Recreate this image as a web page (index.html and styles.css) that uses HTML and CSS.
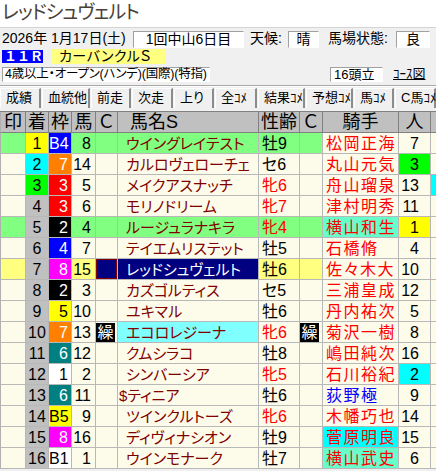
FILE: index.html
```html
<!DOCTYPE html>
<html lang="ja">
<head>
<meta charset="utf-8">
<title>レッドシュヴェルト</title>
<link rel="stylesheet" href="styles.css">
</head>
<body>
<div class="title">レッドシュヴェルト</div>
<div class="meta meta1">
  <span class="date">2026年 1月17日(土)</span>
  <span class="box kai">1回中山6日目</span>
  <span class="lbl tenki-l">天候:</span><span class="box tenki">晴</span>
  <span class="lbl baba-l">馬場状態:</span><span class="box baba">良</span>
</div>
<div class="meta meta2">
  <span class="rno">１１Ｒ</span><span class="rname">カーバンクルＳ</span>
</div>
<div class="meta meta3">
  <span class="box cond">4歳以上・オープン(ハンデ)(国際)(特指)</span>
  <span class="box tosu">16頭立</span>
  <span class="course">ｺｰｽ図</span>
</div>
<div class="sep"></div>
<div class="tabs">
  <span class="tab t1">成績</span>
  <span class="tab t2">血統他</span>
  <span class="tab t3">前走</span>
  <span class="tab t4">次走</span>
  <span class="tab t5">上り</span>
  <span class="tab t6">全ｺﾒ</span>
  <span class="tab t7">結果ｺﾒ</span>
  <span class="tab t8">予想ｺﾒ</span>
  <span class="tab t9">馬ｺﾒ</span>
  <span class="tab t10">C馬ｺﾒ</span>
</div>
<div class="tbl">
  <div class="row head">
    <div class="c">印</div><div class="c">着</div><div class="c">枠</div><div class="c">馬</div><div class="c">Ｃ</div>
    <div class="c name-h">馬名S</div><div class="c">性齢</div><div class="c">Ｃ</div><div class="c">騎手</div><div class="c">人</div><div class="c x"></div>
  </div>

  <div class="row">
    <div class="c bg-g"></div><div class="c chaku bg-y">1</div><div class="c waku w4">B4</div><div class="c uma bg-g">8</div><div class="c bg-g"></div>
    <div class="c name bg-g">ウイングレイテスト</div><div class="c sa bg-g">牡9</div><div class="c bg-g"></div><div class="c jk">松岡正海</div><div class="c nk">7</div><div class="c x"></div>
  </div>
  <div class="row">
    <div class="c"></div><div class="c chaku bg-c">2</div><div class="c waku w7">7</div><div class="c uma">14</div><div class="c"></div>
    <div class="c name">カルロヴェローチェ</div><div class="c sa">セ6</div><div class="c"></div><div class="c jk">丸山元気</div><div class="c nk bg-lime">3</div><div class="c x"></div>
  </div>
  <div class="row">
    <div class="c"></div><div class="c chaku bg-lime">3</div><div class="c waku w3">3</div><div class="c uma">5</div><div class="c"></div>
    <div class="c name">メイクアスナッチ</div><div class="c sa f">牝6</div><div class="c"></div><div class="c jk">舟山瑠泉</div><div class="c nk">13</div><div class="c x bg-c"></div>
  </div>
  <div class="row">
    <div class="c"></div><div class="c chaku bg-gr">4</div><div class="c waku w3">3</div><div class="c uma">6</div><div class="c"></div>
    <div class="c name">モリノドリーム</div><div class="c sa f">牝7</div><div class="c"></div><div class="c jk">津村明秀</div><div class="c nk">11</div><div class="c x"></div>
  </div>
  <div class="row">
    <div class="c bg-g"></div><div class="c chaku bg-gr">5</div><div class="c waku w2">2</div><div class="c uma bg-g">4</div><div class="c bg-g"></div>
    <div class="c name bg-g">ルージュラナキラ</div><div class="c sa f bg-g">牝4</div><div class="c bg-g"></div><div class="c jk bg-m">横山和生</div><div class="c nk bg-y">1</div><div class="c x"></div>
  </div>
  <div class="row">
    <div class="c"></div><div class="c chaku bg-gr">6</div><div class="c waku w4">4</div><div class="c uma">7</div><div class="c"></div>
    <div class="c name">テイエムリステット</div><div class="c sa">牡5</div><div class="c"></div><div class="c jk">石橋脩</div><div class="c nk">4</div><div class="c x"></div>
  </div>
  <div class="row">
    <div class="c bg-ly"></div><div class="c chaku bg-gr">7</div><div class="c waku w8">8</div><div class="c uma bg-ly">15</div><div class="c sel"></div>
    <div class="c name bg-navy">レッドシュヴェルト</div><div class="c sa bg-ly">牡6</div><div class="c bg-ly"></div><div class="c jk">佐々木大</div><div class="c nk">10</div><div class="c x"></div>
  </div>
  <div class="row">
    <div class="c"></div><div class="c chaku bg-gr">8</div><div class="c waku w2">2</div><div class="c uma">3</div><div class="c"></div>
    <div class="c name">カズゴルティス</div><div class="c sa">セ5</div><div class="c"></div><div class="c jk">三浦皇成</div><div class="c nk">12</div><div class="c x"></div>
  </div>
  <div class="row">
    <div class="c"></div><div class="c chaku bg-gr">9</div><div class="c waku w5">5</div><div class="c uma">10</div><div class="c"></div>
    <div class="c name">ユキマル</div><div class="c sa">牡6</div><div class="c"></div><div class="c jk">丹内祐次</div><div class="c nk">5</div><div class="c x"></div>
  </div>
  <div class="row">
    <div class="c"></div><div class="c chaku bg-gr">10</div><div class="c waku w7">7</div><div class="c uma">13</div><div class="c kuri"><span>繰</span></div>
    <div class="c name bg-lc">エコロレジーナ</div><div class="c sa f">牝6</div><div class="c kuri"><span>繰</span></div><div class="c jk">菊沢一樹</div><div class="c nk">8</div><div class="c x"></div>
  </div>
  <div class="row">
    <div class="c"></div><div class="c chaku bg-gr">11</div><div class="c waku w6">6</div><div class="c uma">12</div><div class="c"></div>
    <div class="c name">クムシラコ</div><div class="c sa">牡8</div><div class="c"></div><div class="c jk">嶋田純次</div><div class="c nk">16</div><div class="c x"></div>
  </div>
  <div class="row">
    <div class="c"></div><div class="c chaku bg-gr">12</div><div class="c waku w1">1</div><div class="c uma">2</div><div class="c"></div>
    <div class="c name">シンバーシア</div><div class="c sa f">牝5</div><div class="c"></div><div class="c jk">石川裕紀</div><div class="c nk bg-c">2</div><div class="c x"></div>
  </div>
  <div class="row">
    <div class="c"></div><div class="c chaku bg-gr">13</div><div class="c waku w6">6</div><div class="c uma">11</div><div class="c"></div>
    <div class="c name"><span class="dollar">$</span>ティニア</div><div class="c sa">牡6</div><div class="c"></div><div class="c jk blue">荻野極</div><div class="c nk">9</div><div class="c x"></div>
  </div>
  <div class="row">
    <div class="c"></div><div class="c chaku bg-gr">14</div><div class="c waku w5">B5</div><div class="c uma">9</div><div class="c"></div>
    <div class="c name">ツインクルトーズ</div><div class="c sa f">牝6</div><div class="c"></div><div class="c jk">木幡巧也</div><div class="c nk">14</div><div class="c x"></div>
  </div>
  <div class="row">
    <div class="c"></div><div class="c chaku bg-gr">15</div><div class="c waku w8">8</div><div class="c uma">16</div><div class="c"></div>
    <div class="c name">ディヴィナシオン</div><div class="c sa">牡9</div><div class="c"></div><div class="c jk bg-c">菅原明良</div><div class="c nk">15</div><div class="c x"></div>
  </div>
  <div class="row">
    <div class="c"></div><div class="c chaku bg-gr">16</div><div class="c waku w1">B1</div><div class="c uma">1</div><div class="c"></div>
    <div class="c name">ウインモナーク</div><div class="c sa">牡7</div><div class="c"></div><div class="c jk bg-m">横山武史</div><div class="c nk">6</div><div class="c x"></div>
  </div>
</div>
</body>
</html>
```
FILE: styles.css
```css
* { box-sizing: border-box; }
html, body { margin: 0; padding: 0; }
body {
  width: 436px;
  height: 471px;
  overflow: hidden;
  background: #f0f0f0;
  font-family: "Liberation Sans", "Noto Sans CJK JP", sans-serif;
  color: #000;
  font-feature-settings: "palt";
}

.title {
  height: 28px;
  padding-left: 2px;
  font-size: 19px;
  line-height: 25px;
  color: #4a4038;
  background: #ffffff;
  border-bottom: 1px solid #d4d4d4;
  letter-spacing: -1px;
}

.meta { display: flex; align-items: stretch; font-size: 14px; }
.meta1 { margin-top: 3px; height: 17px; line-height: 15px; }
.meta2 { margin-top: 1px; height: 15px; line-height: 14px; }
.meta3 { margin-top: 3px; height: 15px; line-height: 13px; }

.box {
  background: #fff;
  border: 1px solid;
  border-color: #a0a0a0 #ffffff #ffffff #a0a0a0;
}
.date { width: 133px; padding-left: 2px; white-space: nowrap; }
.kai { width: 111px; text-align: center; }
.lbl { white-space: nowrap; }
.tenki-l { margin-left: 6px; width: 38px; }
.tenki { width: 31px; text-align: center; }
.baba-l { margin-left: 9px; width: 68px; }
.baba { width: 34px; text-align: center; }

.rno {
  margin-left: 2px;
  width: 41px;
  height: 13px;
  margin-top: 1px;
  background: #0000ff;
  color: #fff;
  font-weight: bold;
  font-size: 13px;
  line-height: 13px;
  padding-left: 2px;
  font-feature-settings: normal;
  white-space: nowrap;
}
.rname {
  margin-left: 9px;
  width: 113px;
  background: #ffff80;
  padding-left: 7px;
  font-size: 14px;
  letter-spacing: 0.5px;
}

.cond {
  margin-left: 2px;
  width: 208px;
  font-size: 12.5px;
  padding-left: 2px;
  white-space: nowrap;
  letter-spacing: -0.2px;
}
.tosu { margin-left: 120px; width: 53px; font-size: 13px; padding-left: 3px; }
.course { margin-left: 10px; font-size: 13px; text-decoration: underline; color: #000; }

.sep {
  margin-top: 3px;
  height: 2px;
  border-top: 1px solid #a8a8a8;
  border-bottom: 1px solid #ffffff;
}

.tabs {
  margin-top: 1px;
  height: 20px;
  display: flex;
  gap: 1px;
}
.tab {
  flex: none;
  height: 20px;
  font-size: 13px;
  line-height: 18px;
  padding-left: 5px;
  border-top: 1px solid #ffffff;
  border-left: 1px solid #ffffff;
  border-right: 2px solid #8c8c8c;
  white-space: nowrap;
  background: #f0f0f0;
}
.t1 { width: 41px; }
.t2 { width: 48px; }
.t3 { width: 40px; }
.t4 { width: 41px; }
.t5 { width: 40px; }
.t6 { width: 42px; }
.t7 { width: 47px; }
.t8 { width: 47px; }
.t9 { width: 40px; }
.t10 { width: 41px; }

.tbl { margin-top: 3px; }
.row {
  display: grid;
  grid-template-columns: 26px 23px 23px 24px 22px 141px 41px 23px 76px 32px 5px;
  height: 21px;
}
.row.head {
  height: 22px;
  border-top: 1px solid #808080;
}
.c {
  height: 21px;
  background: #fdfbea;
  border-right: 1px solid #b8b8b8;
  border-bottom: 1px solid #b8b8b8;
  font-size: 15px;
  line-height: 19px;
  padding-top: 1px;
  text-align: center;
  white-space: nowrap;
}
.row .c:first-child { border-left: 1px solid #b0b0b0; }
.head .c {
  background: #c0c0c0;
  font-size: 18px;
  line-height: 20px;
  padding-top: 0;
  border-right-color: #808080;
  border-bottom-color: #808080;
}
.head .name-h { text-align: left; padding-left: 12px; }
.c.x { border-right: none; }

.chaku { font-size: 16px; }
.uma { text-align: right; padding-right: 4px; font-size: 16px; }
.waku { text-align: right; padding-right: 3px; font-size: 16px; }
.name { text-align: left; padding-left: 8px; color: #800000; font-size: 15px; }
.dollar { margin-left: -7px; }
.sa { text-align: left; padding-left: 3px; font-size: 16px; }
.sa.f { color: #ff0000; }
.jk { text-align: left; padding-left: 3px; color: #ff0000; font-size: 16px; letter-spacing: 1.5px; }
.jk.blue { color: #0000ff; }
.nk { text-align: right; padding-right: 11px; font-size: 16px; }

.bg-g { background: #80ff80; }
.bg-y { background: #ffff00; }
.bg-ly { background: #ffff80; }
.bg-gr { background: #c0c0c0; }
.bg-c { background: #00ffff; }
.bg-lc { background: #80ffff; }
.bg-lime { background: #00ff00; }
.bg-m { background: #66ffcc; }
.bg-navy { background: #000080; color: #ffffff; }
.sel { background: #000080; box-shadow: inset 0 0 0 1px #800000; }

.w1 { background: #ffffff; color: #000; }
.w2 { background: #000000; color: #fff; }
.w3 { background: #ff0000; color: #fff; }
.w4 { background: #0000ff; color: #fff; }
.w5 { background: #ffff00; color: #000; }
.w6 { background: #008080; color: #fff; }
.w7 { background: #ff8000; color: #fff; }
.w8 { background: #ff00ff; color: #fff; }

.kuri { padding: 0; text-align: left; }
.kuri span {
  display: inline-block;
  width: 19px;
  height: 19px;
  margin-top: 1px;
  background: #000;
  color: #fff;
  font-size: 16px;
  line-height: 19px;
  text-align: center;
  vertical-align: top;
}
```
